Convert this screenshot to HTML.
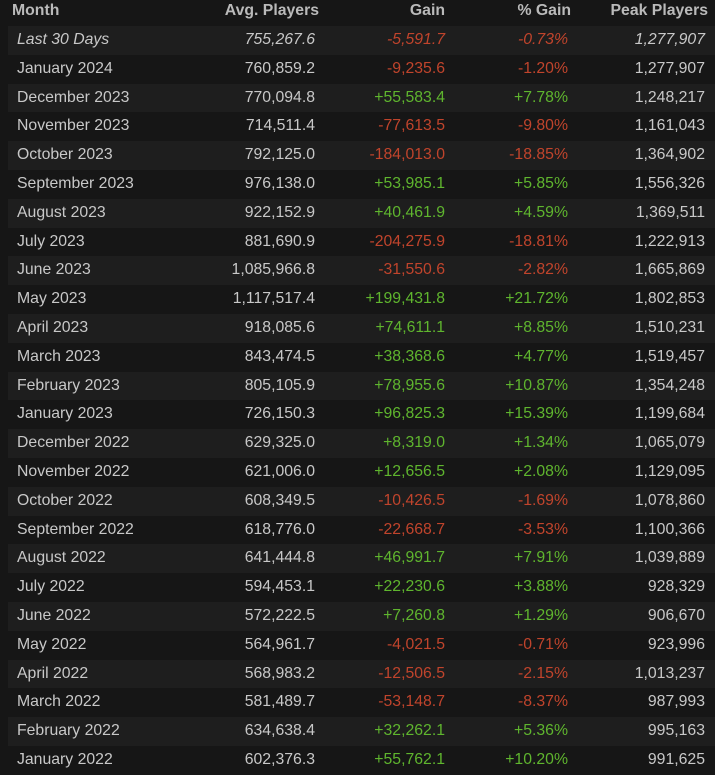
<html><head><style>
body{margin:0;background:#161616;font-family:"Liberation Sans",Arial,sans-serif;font-size:15.8px;color:#c8c8c8;width:715px;height:769px;overflow:hidden}
.r{position:relative;height:28.8px;line-height:28.8px}
.r.a{background:#1e1e1e;margin-left:8px}
.r.a span.m{left:9px}
span{position:absolute;white-space:nowrap}
.m{left:17px}.v{right:400px}.g{right:270px}.p{right:147px}.k{right:10px}
.h{height:26px;line-height:22px;font-weight:bold;color:#bababa}
.h .m{left:12px}.h .v{right:396px}.h .g{right:270px}.h .p{right:144px}.h .k{right:7px}
.n{color:#c0442c}.pp{color:#5fb52e}
.i{font-style:italic}
</style></head><body>
<div class="r h"><span class="m">Month</span><span class="v">Avg. Players</span><span class="g">Gain</span><span class="p">% Gain</span><span class="k">Peak Players</span></div>
<div id="t"></div>
<script>
var d=[["Last 30 Days","755,267.6","-5,591.7","-0.73%","1,277,907"],
["January 2024","760,859.2","-9,235.6","-1.20%","1,277,907"],
["December 2023","770,094.8","+55,583.4","+7.78%","1,248,217"],
["November 2023","714,511.4","-77,613.5","-9.80%","1,161,043"],
["October 2023","792,125.0","-184,013.0","-18.85%","1,364,902"],
["September 2023","976,138.0","+53,985.1","+5.85%","1,556,326"],
["August 2023","922,152.9","+40,461.9","+4.59%","1,369,511"],
["July 2023","881,690.9","-204,275.9","-18.81%","1,222,913"],
["June 2023","1,085,966.8","-31,550.6","-2.82%","1,665,869"],
["May 2023","1,117,517.4","+199,431.8","+21.72%","1,802,853"],
["April 2023","918,085.6","+74,611.1","+8.85%","1,510,231"],
["March 2023","843,474.5","+38,368.6","+4.77%","1,519,457"],
["February 2023","805,105.9","+78,955.6","+10.87%","1,354,248"],
["January 2023","726,150.3","+96,825.3","+15.39%","1,199,684"],
["December 2022","629,325.0","+8,319.0","+1.34%","1,065,079"],
["November 2022","621,006.0","+12,656.5","+2.08%","1,129,095"],
["October 2022","608,349.5","-10,426.5","-1.69%","1,078,860"],
["September 2022","618,776.0","-22,668.7","-3.53%","1,100,366"],
["August 2022","641,444.8","+46,991.7","+7.91%","1,039,889"],
["July 2022","594,453.1","+22,230.6","+3.88%","928,329"],
["June 2022","572,222.5","+7,260.8","+1.29%","906,670"],
["May 2022","564,961.7","-4,021.5","-0.71%","923,996"],
["April 2022","568,983.2","-12,506.5","-2.15%","1,013,237"],
["March 2022","581,489.7","-53,148.7","-8.37%","987,993"],
["February 2022","634,638.4","+32,262.1","+5.36%","995,163"],
["January 2022","602,376.3","+55,762.1","+10.20%","991,625"]];
var h="";d.forEach(function(r,i){var c=r[2][0]=="-"?"n":"pp";h+='<div class="r'+(i%2==0?' a':'')+(i==0?' i':'')+'"><span class="m">'+r[0]+'</span><span class="v">'+r[1]+'</span><span class="g '+c+'">'+r[2]+'</span><span class="p '+c+'">'+r[3]+'</span><span class="k">'+r[4]+'</span></div>';});
document.getElementById("t").innerHTML=h;
</script>
</body></html>
